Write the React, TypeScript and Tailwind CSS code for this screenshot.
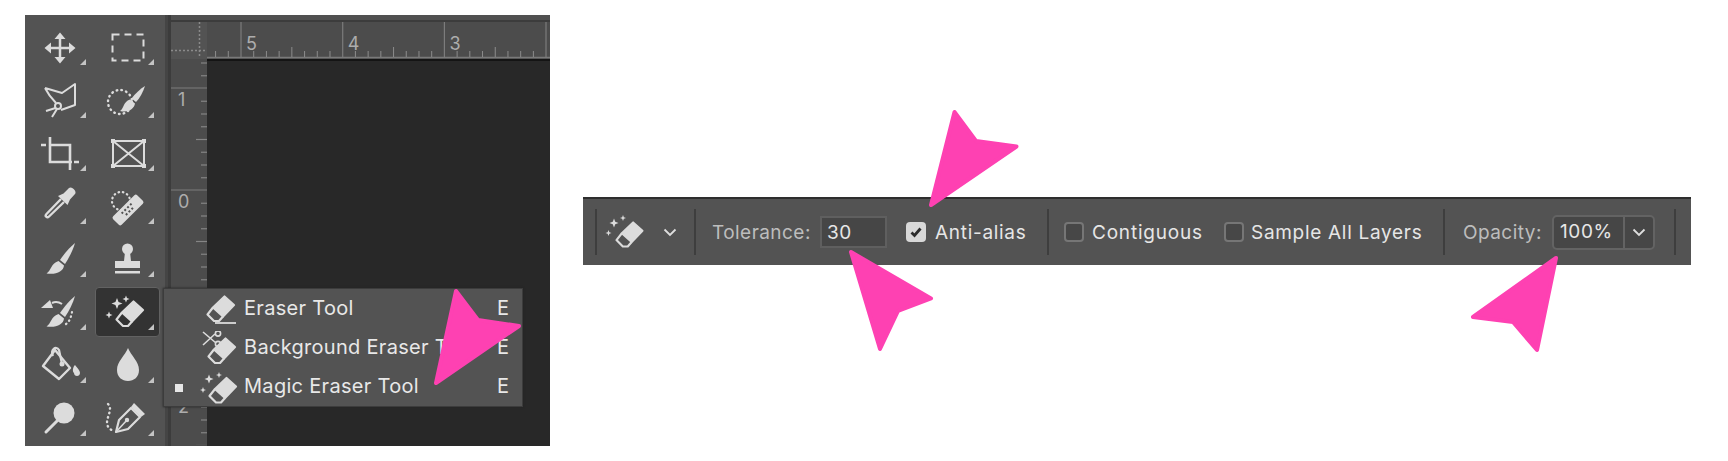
const L = "#dcdcdc";

function Corner() {
  return <path d="M61 37V43H55Z" fill="#c4c4c4" />;
}

function Sparkle({ x, y, r }: { x: number; y: number; r: number }) {
  const k = r * 0.28;
  return (
    <path
      d={`M${x} ${y - r}L${x + k} ${y - k}L${x + r} ${y}L${x + k} ${y + k}L${x} ${y + r}L${x - k} ${y + k}L${x - r} ${y}L${x - k} ${y - k}Z`}
      fill={L}
    />
  );
}

function EraserShape({ x = 0, y = 0, s = 1 }: { x?: number; y?: number; s?: number }) {
  return (
    <g transform={`translate(${x} ${y}) scale(${s})`}>
      <path d="M18.5 1.5L28 10L17 21.5L7 12.5Z" fill={L} stroke={L} strokeWidth="2.2" strokeLinejoin="round" />
      <path d="M7 12.5L1.5 19.5L8 26H13L17 21.5" fill="none" stroke={L} strokeWidth="2.2" strokeLinejoin="round" />
    </g>
  );
}

function BrushHead() {
  return (
    <>
      <path d="M50 9C48 16 44 24 40 30L35 26C39 20 45 13 50 9Z" fill={L} />
      <path d="M33.5 27L39 31.5C38.5 37.5 31 41 21.5 39.5C26 37 25.5 30 33.5 27Z" fill={L} />
    </>
  );
}

const tools: React.ReactNode[] = [
  <g key="move">
    <path d="M35 14V38M23 26H47" stroke={L} strokeWidth="2.5" />
    <path d="M35 10.5L40.5 17H29.5ZM35 41.5L40.5 35H29.5ZM19.5 26L26 20.5V31.5ZM50.5 26L44 20.5V31.5Z" fill={L} />
  </g>,
  <rect key="marquee" x="19.5" y="12.5" width="31" height="26" fill="none" stroke={L} strokeWidth="2" strokeDasharray="7 5" />,
  <g key="lasso" fill="none" stroke={L} strokeWidth="2" strokeLinejoin="round">
    <path d="M20 13L37 18L50 9V30L36 35M20 13C23 19 27 24 31 28" />
    <circle cx="33" cy="31" r="3" />
    <path d="M30.5 33L21 36M32 34L27 42" />
  </g>,
  <g key="objsel">
    <circle cx="27" cy="27" r="12" fill="none" stroke={L} strokeWidth="2.4" strokeDasharray="0.6 4.2" strokeLinecap="round" />
    <path d="M52 11C50 17 47 23 43 27L38.5 23.5C42 19 47 14 52 11Z" fill={L} />
    <path d="M37 24.5L42 28.5C41 34 35 38 27 36C31 33.5 30 27 37 24.5Z" fill={L} />
  </g>,
  <g key="crop" fill="none" stroke={L} strokeWidth="2.6">
    <path d="M25 9V34H47M45 42V17H25M16 17H21M49 34H54" />
  </g>,
  <g key="frame">
    <path d="M20 13H51V38H20ZM20 13L51 38M51 13L20 38" fill="none" stroke={L} strokeWidth="2" />
    <path d="M18 11h4v4h-4zM49 11h4v4h-4zM18 36h4v4h-4zM49 36h4v4h-4z" fill={L} />
  </g>,
  <g key="dropper">
    <path d="M39 21L24 35.5C22 37.5 19.5 35 21.5 33L36 18" fill="none" stroke={L} strokeWidth="2.4" />
    <path d="M33 15L38.5 12.5L44 7C46.5 4.5 52.5 10.5 50 13L45 18.5L42.5 24Z" fill={L} />
  </g>,
  <g key="bandage">
    <circle cx="28" cy="20" r="9" fill="none" stroke={L} strokeWidth="2.2" strokeDasharray="0.6 3.8" strokeLinecap="round" />
    <g transform="rotate(-45 35 29)">
      <rect x="18" y="23" width="34" height="12" rx="2" fill={L} />
      <path d="M28 26h2v2h-2zM32 26h2v2h-2zM36 26h2v2h-2zM40 26h2v2h-2zM30 30h2v2h-2zM34 30h2v2h-2zM38 30h2v2h-2z" fill="#535353" />
    </g>
  </g>,
  <BrushHead key="brush" />,
  <g key="stamp">
    <circle cx="34.5" cy="15" r="5.5" fill={L} />
    <path d="M32 18H37L38 27H47V34H22V27H31Z" fill={L} />
    <path d="M22 37H47V39.5H22Z" fill={L} />
  </g>,
  <g key="history">
    <g transform="translate(0 -1)">
      <path d="M50 10C48 17 44 25 40 31L35 27C39 21 45 14 50 10Z" fill={L} />
      <path d="M33.5 28L39 32.5C38.5 38.5 31 42 21.5 40.5C26 38 25.5 31 33.5 28Z" fill={L} />
    </g>
    <path d="M27 16C31 14 34 15 37 17" fill="none" stroke={L} strokeWidth="2" />
    <path d="M16 21L28 21L25 13Z" fill={L} />
    <path d="M47 25C46 30 45 34 41 37" fill="none" stroke={L} strokeWidth="2.2" strokeDasharray="0.6 3.8" strokeLinecap="round" />
  </g>,
  <g key="magic">
    <Sparkle x={24} y={16.5} r={5.5} />
    <Sparkle x={33} y={12} r={3.5} />
    <Sparkle x={16} y={28} r={3.5} />
    <EraserShape x={22} y={13} />
  </g>,
  <g key="bucket">
    <path d="M30 9L45 27L34 38L18 25Z" transform="translate(0 1)" fill="none" stroke={L} strokeWidth="2.4" strokeLinejoin="round" />
    <path d="M28 16C25 10 31 5 34 10L37 24" fill="none" stroke={L} strokeWidth="2.2" />
    <circle cx="37" cy="24" r="2.5" fill={L} />
    <path d="M50 25C52 28 55 30 55 33C55 37 49 37 49 33C47 31 48 27 50 25Z" fill={L} />
  </g>,
  <path key="drop" d="M35 8C38 16 46 21 46 30C46 37 41 41 35 41C29 41 24 37 24 30C24 21 32 16 35 8Z" fill={L} />,
  <g key="zoom">
    <circle cx="39" cy="20" r="10.5" fill={L} />
    <path d="M32 28L21 39" stroke={L} strokeWidth="3" strokeLinecap="round" />
  </g>,
  <g key="pen">
    <path d="M15 11C20 16 14 23 14 30C14 34 17 36 20 38" fill="none" stroke={L} strokeWidth="2.4" strokeDasharray="0.6 4" strokeLinecap="round" />
    <path d="M23 39L26 27L38 15L47 24L35 36Z" fill="none" stroke={L} strokeWidth="2.2" strokeLinejoin="round" />
    <path d="M41 10L52 21L48 24L38 14Z" fill={L} />
    <path d="M23 39L34 27" stroke={L} strokeWidth="1.6" />
    <circle cx="34" cy="27" r="2.2" fill={L} />
  </g>,
];

function ToolGrid() {
  return (
    <div className="w-[140px] shrink-0 bg-[#535353] pt-[7px]">
      <div className="grid grid-cols-[68px_68px] auto-rows-[53px]">
        {tools.map((t, i) => (
          <div key={i} className="relative h-[53px] w-[68px]">
            {i === 11 && (
              <div className="absolute bottom-[3px] left-[2px] right-[1px] top-0 rounded-[4px] border border-[#626262] bg-[#333333]" />
            )}
            <svg viewBox="0 0 68 53" width="68" height="53" className="relative block">
              {t}
              <Corner />
            </svg>
          </div>
        ))}
      </div>
    </div>
  );
}

function RulerTop() {
  const majors = [241, 342.7, 444.4, 546].map((x) => x - 171);
  const labels = ["5", "4", "3"];
  const ticks: React.ReactNode[] = [];
  for (let m = -1; m < 4; m++) {
    for (let k = 1; k < 8; k++) {
      const x = 70 + m * 101.7 + (k * 101.7) / 8;
      if (x < 38 || x > 379) continue;
      ticks.push(<path key={`${m}-${k}`} d={`M${x} 35V${k === 4 ? 25 : 29}`} stroke="#8c8c8c" strokeWidth="1" />);
    }
  }
  return (
    <svg viewBox="0 0 379 37" width="379" height="37" className="block">
      <rect x="0" y="0" width="36" height="37" fill="#535353" />
      <path d="M28.5 0V36M0 28.5H36" stroke="#8a8a8a" strokeWidth="1.5" strokeDasharray="2 2" />
      <path d="M36 35.5H379" stroke="#7a7a7a" strokeWidth="1.5" />
      {ticks}
      {majors.map((x) => (
        <path key={x} d={`M${x} 0V36`} stroke="#7c7c7c" strokeWidth="1.2" />
      ))}
      {labels.map((l, i) => (
        <text key={l} x={majors[i] + 5} y="27.5" fontSize="18" fontFamily="Inter, sans-serif" fill="#adadad">
          {l}
        </text>
      ))}
    </svg>
  );
}

function RulerLeft() {
  const ticks: React.ReactNode[] = [];
  for (let y = 0; y < 386; y += 12.75) {
    const offset = y + 4;
    const idx = Math.round(y / 12.75);
    const isMajor = idx % 8 === 2;
    if (isMajor) continue;
    ticks.push(<path key={y} d={`M${idx % 4 === 2 ? 25 : 30} ${offset}H36`} stroke="#858585" strokeWidth="1.2" />);
  }
  return (
    <svg viewBox="0 0 36 386" width="36" height="386" className="block">
      {ticks}
      {[29, 131, 233, 336].map((y) => (
        <path key={y} d={`M0 ${y}H36`} stroke="#7c7c7c" strokeWidth="1.2" />
      ))}
      {[
        ["1", 47],
        ["0", 149],
        ["1", 251],
        ["2", 354],
      ].map(([t, y]) => (
        <text key={`${t}${y}`} x="7" y={y as number} fontSize="18" fontFamily="Inter, sans-serif" fill="#adadad">
          {t}
        </text>
      ))}
    </svg>
  );
}

function MenuRow({ label, bullet, icon }: { label: string; bullet?: boolean; icon: React.ReactNode }) {
  return (
    <div className="flex h-[39px] items-center">
      <div className="flex w-[27px] justify-center pl-[2px]">
        {bullet && <div className="h-[8px] w-[8px] bg-[#e6e6e6]" />}
      </div>
      <svg viewBox="0 0 48 36" width="48" height="36" className="shrink-0">
        {icon}
      </svg>
      <span className="mb-[4px] ml-[5px] whitespace-nowrap text-[20px] tracking-[0.3px] text-[#e8e8e8]">{label}</span>
      <span className="mb-[4px] ml-auto mr-[13px] text-[20px] text-[#e8e8e8]">E</span>
    </div>
  );
}

function Flyout() {
  return (
    <div className="absolute left-[138px] top-[273px] h-[119px] w-[360px] border border-[#3c3c3c] bg-[#535353] pt-[1px] shadow-[0_0_2px_#222]">
      <MenuRow
        label="Eraser Tool"
        icon={
          <>
            <EraserShape x={15} y={3} />
            <path d="M24 31H45" stroke={L} strokeWidth="1.8" />
          </>
        }
      />
      <MenuRow
        label="Background Eraser Tool"
        icon={
          <>
            <g fill="none" stroke={L} strokeWidth="1.6">
              <path d="M12 1L25 12M12 14L24 3" />
              <circle cx="27" cy="2.5" r="2.6" />
              <circle cx="27" cy="13" r="2.6" />
            </g>
            <EraserShape x={16} y={6} />
          </>
        }
      />
      <MenuRow
        label="Magic Eraser Tool"
        bullet
        icon={
          <>
            <Sparkle x={18} y={9} r={4.5} />
            <Sparkle x={28} y={5} r={3} />
            <Sparkle x={12} y={20} r={3} />
            <EraserShape x={17} y={6.5} />
          </>
        }
      />
    </div>
  );
}

function Sep() {
  return <div className="h-[46px] w-[2px] shrink-0 bg-[#3e3e3e]" />;
}

function Check({ checked }: { checked?: boolean }) {
  return checked ? (
    <div className="flex h-[20px] w-[20px] shrink-0 items-center justify-center rounded-[4px] bg-[#d8d8d8]">
      <svg viewBox="0 0 14 14" width="14" height="14">
        <path d="M2.5 7.5L5.5 10.5L11.5 3.5" fill="none" stroke="#2c2c2c" strokeWidth="2.8" />
      </svg>
    </div>
  ) : (
    <div className="h-[20px] w-[20px] shrink-0 rounded-[4px] border-2 border-[#767676] bg-[#474747]" />
  );
}

function Chevron() {
  return (
    <svg viewBox="0 0 14 9" width="14" height="9" className="shrink-0">
      <path d="M1.5 1.5L7 7L12.5 1.5" fill="none" stroke="#dedede" strokeWidth="1.8" />
    </svg>
  );
}

function Toolbar() {
  return (
    <div className="ml-[33px] mt-[197px] flex h-[68px] w-[1108px] shrink-0 items-center border-t-2 border-[#2e2e2e] bg-[#535353] pl-[12px] text-[19px]">
      <Sep />
      <svg viewBox="0 0 40 36" width="40" height="36" className="ml-[8px] shrink-0">
        <Sparkle x={9} y={9} r={4.5} />
        <Sparkle x={18} y={4} r={3} />
        <Sparkle x={3.5} y={19} r={3} />
        <EraserShape x={10} y={7} s={0.98} />
      </svg>
      <div className="ml-[18px]">
        <Chevron />
      </div>
      <div className="ml-[17px]">
        <Sep />
      </div>
      <span className="ml-[16px] mt-[2px] w-[98px] whitespace-nowrap tracking-[0.45px] text-[#bdbdbd]">Tolerance:</span>
      <div className="ml-[10px] flex h-[32px] w-[67px] items-center border-2 border-[#5f5f5f] bg-[#464646] pl-[5px] pt-[2px] tracking-[0.6px] text-[#e6e6e6]">30</div>
      <div className="ml-[19px]">
        <Check checked />
      </div>
      <span className="ml-[9px] mt-[2px] w-[90px] whitespace-nowrap tracking-[0.7px] text-[#e6e6e6]">Anti-alias</span>
      <div className="ml-[22px]">
        <Sep />
      </div>
      <div className="ml-[15px]">
        <Check />
      </div>
      <span className="ml-[8px] mt-[2px] w-[109px] whitespace-nowrap tracking-[0.8px] text-[#e6e6e6]">Contiguous</span>
      <div className="ml-[23px]">
        <Check />
      </div>
      <span className="ml-[7px] mt-[2px] w-[169px] whitespace-nowrap tracking-[0.7px] text-[#e6e6e6]">Sample All Layers</span>
      <div className="ml-[23px]">
        <Sep />
      </div>
      <span className="ml-[18px] mt-[2px] w-[79px] whitespace-nowrap tracking-[0.45px] text-[#bdbdbd]">Opacity:</span>
      <div className="ml-[10px] flex h-[35px] w-[103px] items-stretch rounded-[5px] border-2 border-[#636363] bg-[#464646] tracking-[0.6px] text-[#e6e6e6]">
        <div className="flex w-[71px] items-center border-r-2 border-[#636363] pl-[6px]">100%</div>
        <div className="flex flex-1 items-center justify-center">
          <Chevron />
        </div>
      </div>
      <div className="ml-[19px]">
        <Sep />
      </div>
    </div>
  );
}

export default function App() {
  return (
    <div className="relative flex h-[461px] w-[1728px] items-start overflow-hidden bg-white font-['Inter',sans-serif]">
      <div className="relative ml-[25px] mt-[15px] flex h-[431px] w-[525px] shrink-0">
        <ToolGrid />
        <div className="flex w-[6px] shrink-0">
          <div className="w-[3px] bg-[#454545]" />
          <div className="w-[3px] bg-[#3c3c3c]" />
        </div>
        <div className="flex w-[379px] shrink-0 flex-col">
          <div className="h-[7px] border-b-2 border-[#3c3c3c] bg-[#505050]" />
          <div className="h-[37px] bg-[#4c4c4c]">
            <RulerTop />
          </div>
          <div className="flex flex-1">
            <div className="w-[36px] shrink-0 overflow-hidden bg-[#4c4c4c]">
              <RulerLeft />
            </div>
            <div className="flex-1 border-t-2 border-[#141414] bg-[#282828]" />
          </div>
        </div>
        <Flyout />
      </div>
      <Toolbar />
      <svg viewBox="0 0 1728 461" width="1728" height="461" className="pointer-events-none absolute left-0 top-0">
        <g fill="#fe41b2" stroke="#fe41b2" strokeWidth="4" strokeLinejoin="round">
          <path d="M456 291L478 320L519 326L436 383Z" />
          <path d="M954.5 112L976 141L1016.5 146.5L931 205Z" />
          <path d="M851 252L931 298.5L898 311L880 349Z" />
          <path d="M1556 258L1473 317L1513 322L1537 350Z" />
        </g>
      </svg>
    </div>
  );
}
